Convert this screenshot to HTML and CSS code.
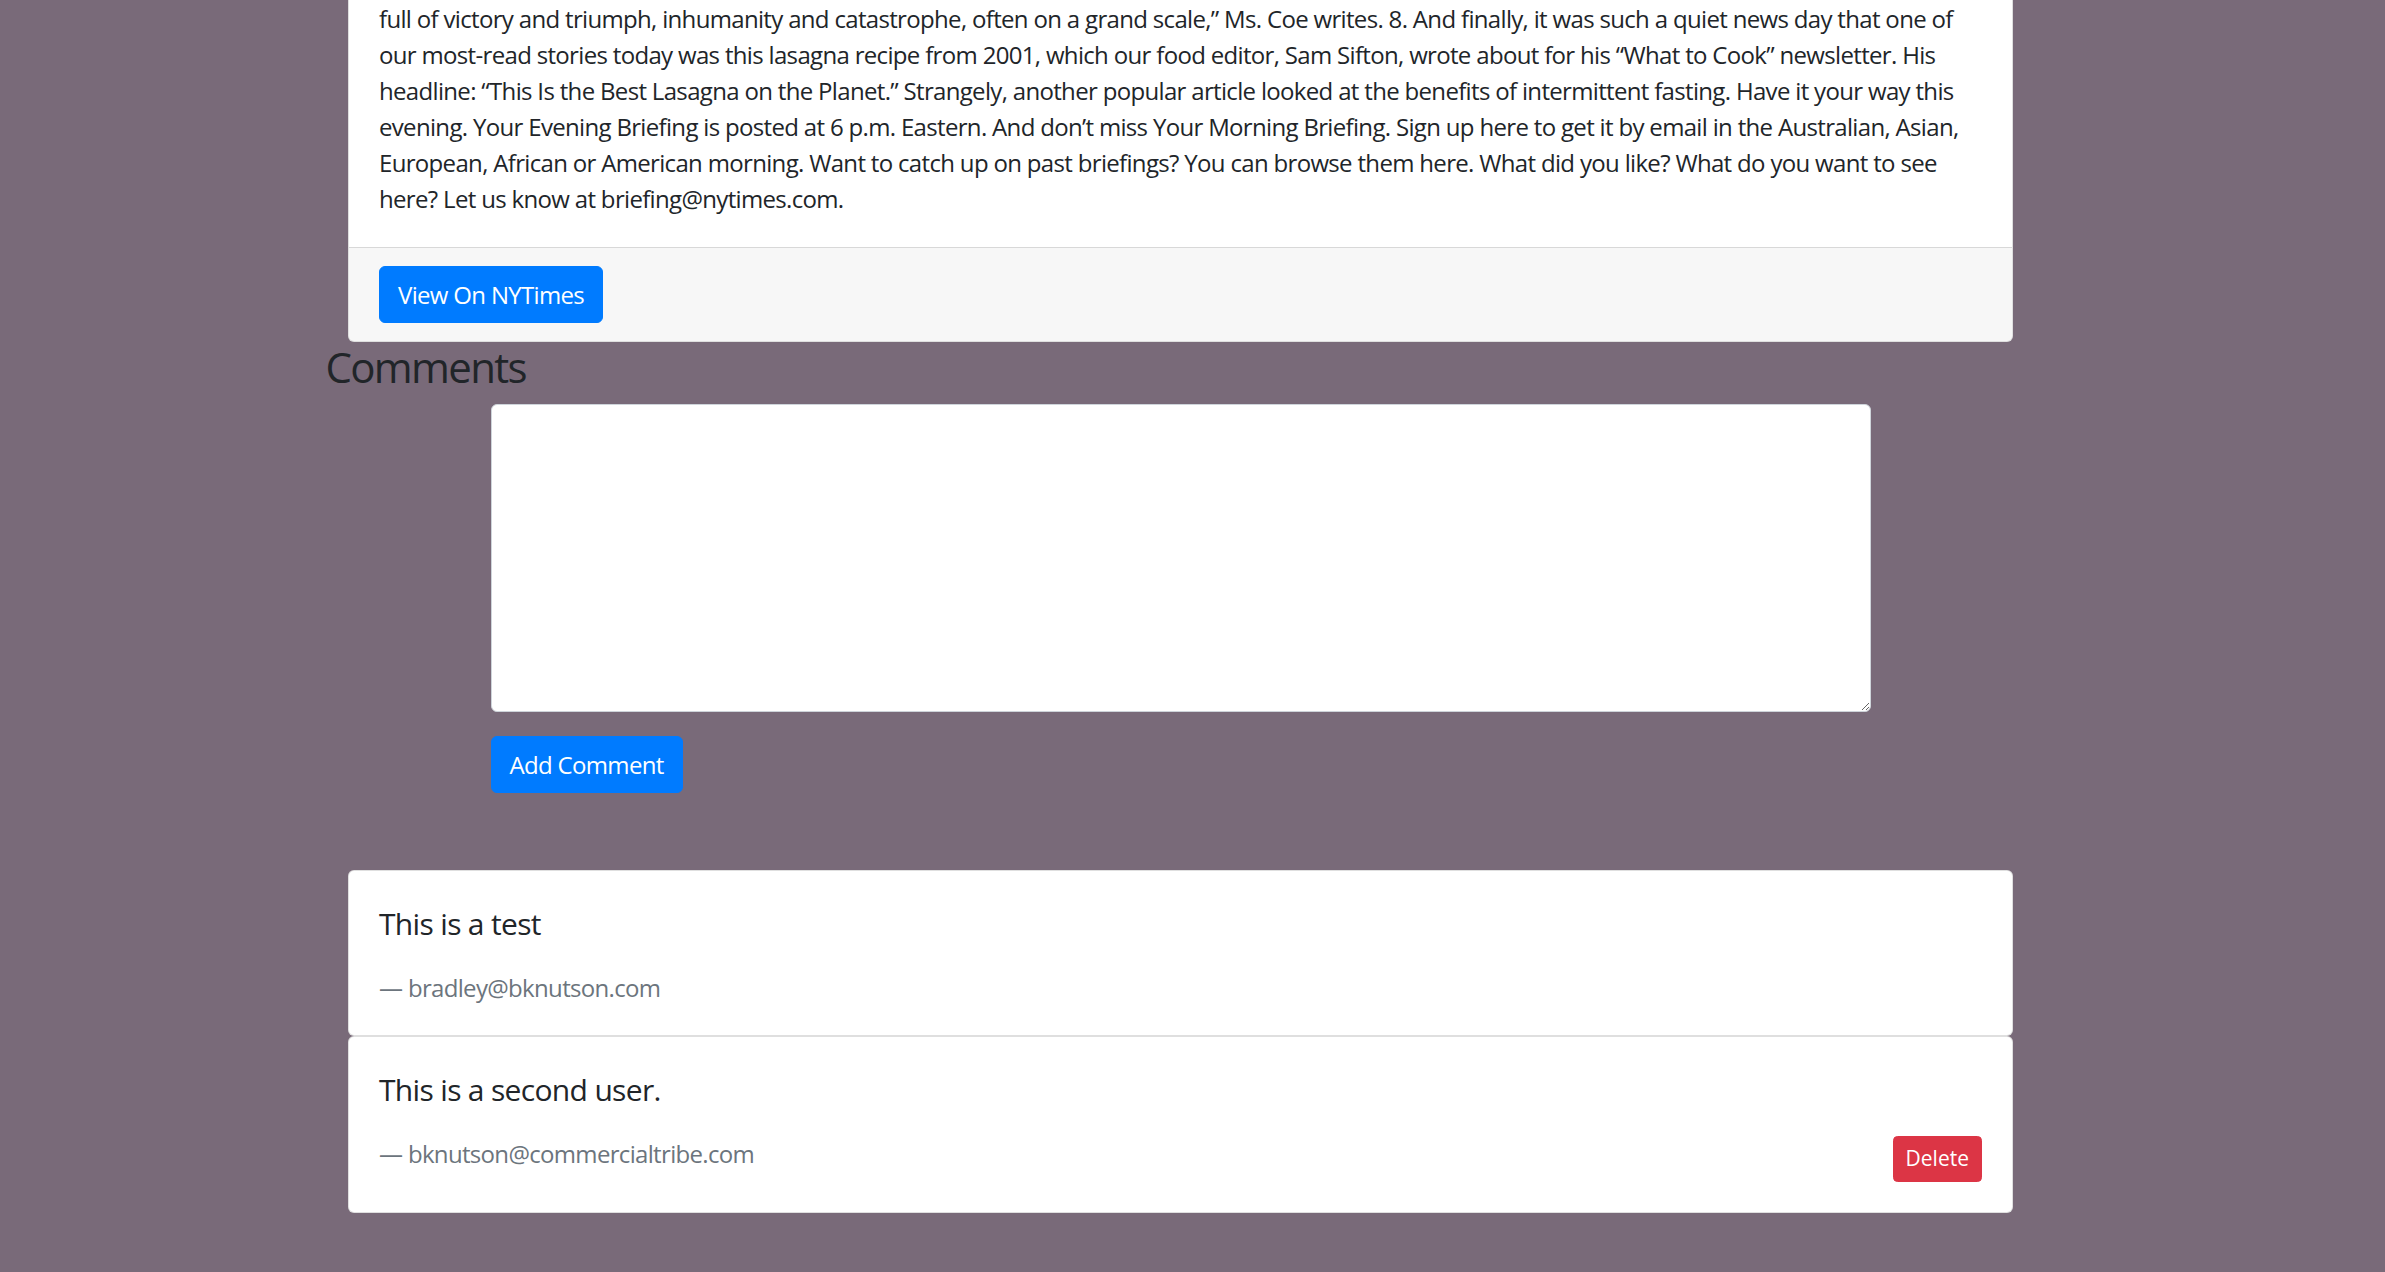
FILE: index.html
```html
<!DOCTYPE html>
<html lang="en">
<head>
<meta charset="utf-8">
<title>Briefing</title>
<link rel="stylesheet" href="styles.css">
</head>
<body>
<div class="container">
  <div class="card article">
    <div class="card-body article-body">
      <p class="article-text">
        <span class="line">full of victory and triumph, inhumanity and catastrophe, often on a grand scale,” Ms. Coe writes. 8. And finally, it was such a quiet news day that one of</span>
        <span class="line">our most-read stories today was this lasagna recipe from 2001, which our food editor, Sam Sifton, wrote about for his “What to Cook” newsletter. His</span>
        <span class="line">headline: “This Is the Best Lasagna on the Planet.” Strangely, another popular article looked at the benefits of intermittent fasting. Have it your way this</span>
        <span class="line">evening. Your Evening Briefing is posted at 6 p.m. Eastern. And don’t miss Your Morning Briefing. Sign up here to get it by email in the Australian, Asian,</span>
        <span class="line">European, African or American morning. Want to catch up on past briefings? You can browse them here. What did you like? What do you want to see</span>
        <span class="line">here? Let us know at briefing@nytimes.com.</span>
      </p>
    </div>
    <div class="card-footer">
      <a class="btn btn-primary" href="#">View On NYTimes</a>
    </div>
  </div>

  <h3 class="comments-title">Comments</h3>

  <form class="comment-form">
    <textarea class="form-control" aria-label="Comment"></textarea>
    <button type="button" class="btn btn-primary">Add Comment</button>
  </form>

  <div class="comment-list">
    <div class="card comment">
      <div class="card-body">
        <blockquote class="blockquote">
          <p class="comment-text">This is a test</p>
          <div class="comment-meta">
            <footer class="blockquote-footer">bradley@bknutson.com</footer>
          </div>
        </blockquote>
      </div>
    </div>
    <div class="card comment">
      <div class="card-body">
        <blockquote class="blockquote">
          <p class="comment-text">This is a second user.</p>
          <div class="comment-meta">
            <footer class="blockquote-footer">bknutson@commercialtribe.com</footer>
            <button type="button" class="btn btn-danger btn-sm">Delete</button>
          </div>
        </blockquote>
      </div>
    </div>
  </div>
</div>
</body>
</html>
```
FILE: styles.css
```css
html, body {
  margin: 0;
  padding: 0;
}

body {
  background: #796a79;
  color: #212529;
  font-family: "Open Sans", "Noto Sans", "Liberation Sans", sans-serif;
  font-size: 24px;
  line-height: 1.5;
  letter-spacing: -0.028em;
  padding-right: 24px;
  min-height: 1272px;
  box-sizing: border-box;
}

.container {
  width: 1710px;
  margin: 0 auto;
  padding: 0 22.5px;
  box-sizing: border-box;
}

.card {
  background: #fff;
  border: 1px solid rgba(0, 0, 0, 0.125);
  border-radius: 6px;
  display: flex;
  flex-direction: column;
}

.card-body {
  padding: 30px;
}

.article {
  border-top: 0;
  border-top-left-radius: 0;
  border-top-right-radius: 0;
}

.article-body {
  padding-top: 1px;
}

.article-text {
  margin: 0;
}

.line {
  display: block;
  white-space: nowrap;
}

.card-footer {
  padding: 18px 30px;
  background: rgba(0, 0, 0, 0.03);
  border-top: 1px solid rgba(0, 0, 0, 0.125);
  border-radius: 0 0 5px 5px;
}

.btn {
  display: inline-block;
  font-family: inherit;
  font-size: 24px;
  line-height: 36px;
  letter-spacing: -0.028em;
  padding: 9.5px 18px;
  border: 1px solid transparent;
  border-radius: 6px;
  text-decoration: none;
  cursor: pointer;
  vertical-align: middle;
}

.btn-primary {
  color: #fff;
  background: #007bff;
  border-color: #007bff;
}

.btn-danger {
  color: #fff;
  background: #dc3545;
  border-color: #dc3545;
}

.btn-sm {
  font-size: 21px;
  line-height: 31.5px;
  letter-spacing: 0;
  padding: 6px 12px;
  border-radius: 4.5px;
}

.comments-title {
  margin: 0 -22.5px 12px;
  font-size: 42px;
  font-weight: 400;
  line-height: 1.2;
  letter-spacing: -0.04em;
}

.comment-form {
  width: 1380px;
  margin: 0 auto;
}

.form-control {
  display: block;
  width: 100%;
  height: 308px;
  box-sizing: border-box;
  margin: 0 0 24px;
  padding: 9px 18px;
  font-family: inherit;
  font-size: 24px;
  color: #495057;
  background: #fff;
  border: 1.5px solid #ced4da;
  border-radius: 6px;
}

.comment-list {
  margin-top: 77px;
}

.comment {
  border-width: 1.5px;
}

.blockquote {
  margin: 0;
  font-size: 30px;
}

.comment-text {
  margin: 0 0 24px;
  line-height: 45px;
}

.comment-meta {
  display: flex;
  justify-content: space-between;
  align-items: flex-start;
}

.blockquote-footer {
  display: block;
  font-size: 24px;
  line-height: 35px;
  color: #6c757d;
}

.blockquote-footer::before {
  content: "\2014\00A0";
}
```
